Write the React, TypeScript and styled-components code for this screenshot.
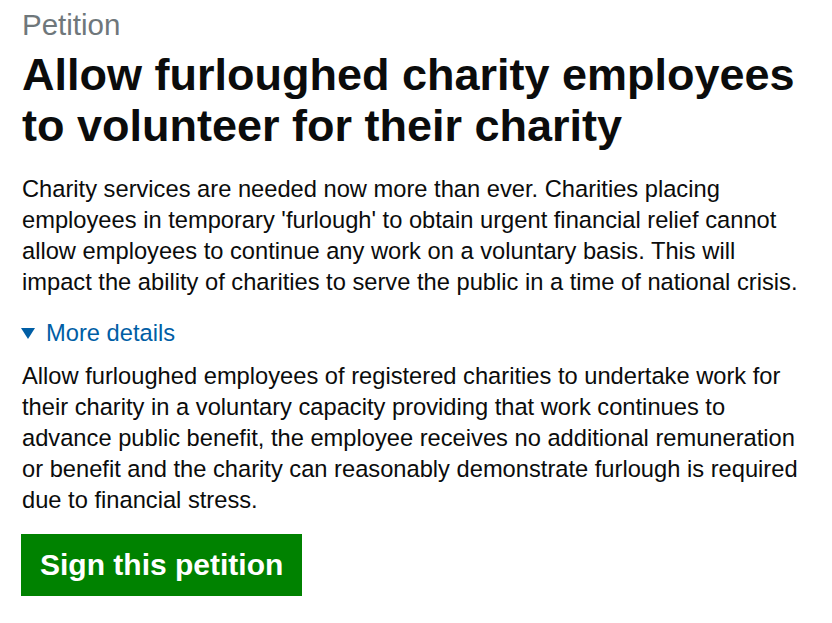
import styled, { createGlobalStyle } from "styled-components";

const GlobalStyle = createGlobalStyle`
  body {
    margin: 0;
    background: #ffffff;
    font-family: "Liberation Sans", Arial, sans-serif;
    color: #0b0c0c;
  }
`;

const Page = styled.main`
  padding: 8px 22px 0 22px;
`;

const Caption = styled.span`
  display: block;
  color: #6f777b;
  font-size: 29.5px;
  line-height: 34px;
`;

const Heading = styled.h1`
  margin: 7px 0 23px 0;
  font-size: 45px;
  line-height: 51px;
  font-weight: 700;
`;

const Paragraph = styled.p<{ $gap?: number }>`
  margin: 0 0 ${(p) => p.$gap ?? 20}px 0;
  font-size: 23.7px;
  line-height: 31px;
`;

const Details = styled.details`
  margin: 0;
`;

const Summary = styled.summary`
  display: flex;
  align-items: center;
  gap: 11px;
  color: #005ea5;
  font-size: 23.7px;
  line-height: 31px;
  cursor: pointer;
  list-style: none;
  margin-bottom: 12px;

  &::-webkit-details-marker {
    display: none;
  }
`;

const Arrow = styled.span`
  width: 0;
  height: 0;
  margin-left: -1px;
  border-left: 7.5px solid transparent;
  border-right: 7.5px solid transparent;
  border-top: 11px solid #005ea5;
`;

const Button = styled.button`
  display: inline-block;
  margin-left: -1px;
  padding: 12px 19px;
  border: none;
  background: #008200;
  box-shadow: 0 2px 0 #003b00;
  color: #ffffff;
  font-family: "Liberation Sans", Arial, sans-serif;
  font-size: 30px;
  font-weight: 700;
  line-height: 38px;
  cursor: pointer;
`;

export default function App() {
  return (
    <>
      <GlobalStyle />
      <Page>
        <Caption>Petition</Caption>
        <Heading>Allow furloughed charity employees to volunteer for their charity</Heading>
        <Paragraph>
          Charity services are needed now more than ever. Charities placing employees in temporary
          'furlough' to obtain urgent financial relief cannot allow employees to continue any work on
          a voluntary basis. This will impact the ability of charities to serve the public in a time
          of national crisis.
        </Paragraph>
        <Details open>
          <Summary>
            <Arrow />
            More details
          </Summary>
          <Paragraph $gap={18}>
            Allow furloughed employees of registered charities to undertake work for their charity in
            a voluntary capacity providing that work continues to advance public benefit, the employee
            receives no additional remuneration or benefit and the charity can reasonably demonstrate
            furlough is required due to financial stress.
          </Paragraph>
        </Details>
        <Button type="button">Sign this petition</Button>
      </Page>
    </>
  );
}
